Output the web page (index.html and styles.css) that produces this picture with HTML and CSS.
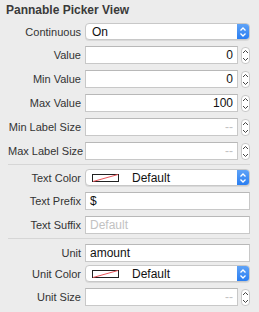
FILE: index.html
```html
<!DOCTYPE html>
<html lang="en">
<head>
    <meta charset="UTF-8">
    <title>Pannable Picker View</title>
    <link rel="stylesheet" href="styles.css">
</head>
<body>
    <div class="inspector">
        <h1>Pannable Picker View</h1>

        <!-- Value settings -->
        <div class="section">
            <div class="row">
                <label>Continuous</label>
                <div class="popup">
                    <span class="popup-text">On</span>
                    <span class="popup-arrows"><svg width="8" height="12" viewBox="0 0 8 12"><path d="M1.5 4.5 L4 2 L6.5 4.5 M1.5 7.5 L4 10 L6.5 7.5" fill="none" stroke="#fff" stroke-width="1.3"/></svg></span>
                </div>
            </div>
            <div class="row">
                <label>Value</label>
                <div class="field num">0</div>
                <div class="stepper"><svg width="9" height="17" viewBox="0 0 9 17"><path d="M2 6 L4.5 3.5 L7 6 M2 11 L4.5 13.5 L7 11" fill="none" stroke="#444" stroke-width="1"/></svg></div>
            </div>
            <div class="row">
                <label>Min Value</label>
                <div class="field num">0</div>
                <div class="stepper"><svg width="9" height="17" viewBox="0 0 9 17"><path d="M2 6 L4.5 3.5 L7 6 M2 11 L4.5 13.5 L7 11" fill="none" stroke="#444" stroke-width="1"/></svg></div>
            </div>
            <div class="row">
                <label>Max Value</label>
                <div class="field num">100</div>
                <div class="stepper"><svg width="9" height="17" viewBox="0 0 9 17"><path d="M2 6 L4.5 3.5 L7 6 M2 11 L4.5 13.5 L7 11" fill="none" stroke="#444" stroke-width="1"/></svg></div>
            </div>
            <div class="row">
                <label>Min Label Size</label>
                <div class="field num placeholder">--</div>
                <div class="stepper"><svg width="9" height="17" viewBox="0 0 9 17"><path d="M2 6 L4.5 3.5 L7 6 M2 11 L4.5 13.5 L7 11" fill="none" stroke="#444" stroke-width="1"/></svg></div>
            </div>
            <div class="row">
                <label>Max Label Size</label>
                <div class="field num placeholder">--</div>
                <div class="stepper"><svg width="9" height="17" viewBox="0 0 9 17"><path d="M2 6 L4.5 3.5 L7 6 M2 11 L4.5 13.5 L7 11" fill="none" stroke="#444" stroke-width="1"/></svg></div>
            </div>
        </div>

        <!-- Text settings -->
        <div class="section">
            <div class="row">
                <label>Text Color</label>
                <div class="popup">
                    <span class="swatch"><svg width="27" height="8" viewBox="0 0 27 8"><rect x="0.5" y="0.5" width="26" height="7" fill="#fff" stroke="#222"/><path d="M1 7.5 L26 0.5" stroke="#e8545a" stroke-width="1"/></svg></span>
                    <span class="popup-text">Default</span>
                    <span class="popup-arrows"><svg width="8" height="12" viewBox="0 0 8 12"><path d="M1.5 4.5 L4 2 L6.5 4.5 M1.5 7.5 L4 10 L6.5 7.5" fill="none" stroke="#fff" stroke-width="1.3"/></svg></span>
                </div>
            </div>
            <div class="row">
                <label>Text Prefix</label>
                <div class="field">$</div>
            </div>
            <div class="row">
                <label>Text Suffix</label>
                <div class="field placeholder">Default</div>
            </div>
        </div>

        <!-- Unit settings -->
        <div class="section unit">
            <div class="row">
                <label>Unit</label>
                <div class="field">amount</div>
            </div>
            <div class="row close">
                <label>Unit Color</label>
                <div class="popup">
                    <span class="swatch"><svg width="27" height="8" viewBox="0 0 27 8"><rect x="0.5" y="0.5" width="26" height="7" fill="#fff" stroke="#222"/><path d="M1 7.5 L26 0.5" stroke="#e8545a" stroke-width="1"/></svg></span>
                    <span class="popup-text">Default</span>
                    <span class="popup-arrows"><svg width="8" height="12" viewBox="0 0 8 12"><path d="M1.5 4.5 L4 2 L6.5 4.5 M1.5 7.5 L4 10 L6.5 7.5" fill="none" stroke="#fff" stroke-width="1.3"/></svg></span>
                </div>
            </div>
            <div class="row">
                <label>Unit Size</label>
                <div class="field num placeholder">--</div>
                <div class="stepper"><svg width="9" height="17" viewBox="0 0 9 17"><path d="M2 6 L4.5 3.5 L7 6 M2 11 L4.5 13.5 L7 11" fill="none" stroke="#444" stroke-width="1"/></svg></div>
            </div>
        </div>
    </div>
</body>
</html>
```

FILE: styles.css
```css
* {
    box-sizing: border-box;
    margin: 0;
    padding: 0;
}

body {
    font-family: "Liberation Sans", Arial, sans-serif;
    background: #ececec;
    color: #262626;
    width: 259px;
    height: 312px;
    overflow: hidden;
}

.inspector {
    padding: 4px 9px 0 8px;
}

h1 {
    font-size: 12px;
    font-weight: bold;
    color: #3a3a3a;
    height: 19px;
    line-height: 13px;
    margin-left: -2px;
}

.section {
    display: flex;
    flex-direction: column;
    gap: 6px;
    padding-bottom: 4px;
}

.section + .section {
    border-top: 1px solid #d6d6d6;
    padding-top: 4px;
}

.section.unit {
    padding-top: 5px;
}

.row {
    display: flex;
    align-items: center;
}

.row.close {
    margin-top: -3px;
}

label {
    width: 73px;
    margin-right: 4px;
    text-align: right;
    font-size: 11px;
    color: #333;
    white-space: nowrap;
}

.field {
    flex: 1;
    height: 18px;
    background: #fff;
    border: 1px solid #c8c8c8;
    border-top-color: #b8b8b8;
    font-size: 12px;
    line-height: 16px;
    padding: 0 4px;
    color: #111;
}

.field.num {
    text-align: right;
    margin-right: 3px;
}

.placeholder {
    color: #c2c2c2;
}

.stepper {
    width: 9px;
    height: 17px;
    border: 1px solid #c8c8c8;
    border-radius: 4px;
    background: #fff;
    display: flex;
    align-items: center;
    justify-content: center;
    overflow: hidden;
}

.stepper svg {
    flex-shrink: 0;
}

.popup {
    flex: 1;
    height: 17px;
    display: flex;
    align-items: center;
    background: #fff;
    border: 1px solid #c8c8c8;
    border-radius: 4px;
    box-shadow: 0 1px 0 rgba(0, 0, 0, 0.08);
    overflow: hidden;
    font-size: 12px;
    color: #111;
}

.popup-text {
    flex: 1;
    padding-left: 6px;
}

.swatch {
    display: flex;
    padding-left: 6px;
}

.swatch + .popup-text {
    padding-left: 13px;
}

.popup-arrows {
    width: 12px;
    height: 100%;
    background: linear-gradient(#5fa3f7, #2a7ef2);
    display: flex;
    align-items: center;
    justify-content: center;
}
```
